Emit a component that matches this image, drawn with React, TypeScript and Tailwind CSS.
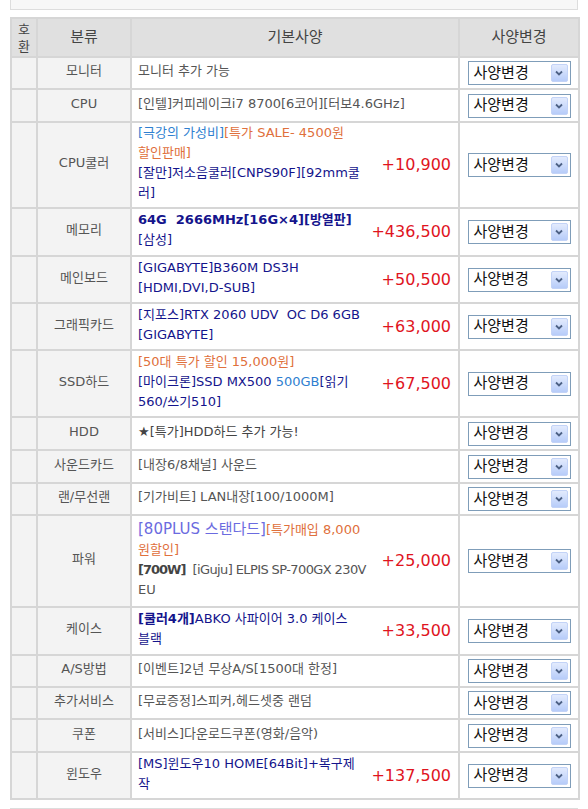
import React from "react";

type Seg = { t: string; c: string; b?: boolean; s?: string };
type Row = { cat: string; h: string; price?: string; lines: Seg[][] };

const GRAY = "text-[#555555]";
const NAVY = "text-[#14148c]";
const BLUE = "text-[#2f7fd0]";
const ORANGE = "text-[#e0703c]";
const LAV = "text-[#6b6be0]";
const DARK = "text-[#444444]";

const rows: Row[] = [
  { cat: "모니터", h: "h-[32px]", lines: [[{ t: "모니터 추가 가능", c: GRAY }]] },
  { cat: "CPU", h: "h-[33px]", lines: [[{ t: "[인텔]커피레이크i7 8700[6코어][터보4.6GHz]", c: GRAY }]] },
  {
    cat: "CPU쿨러",
    h: "h-[85px]",
    price: "+10,900",
    lines: [
      [{ t: "[극강의 가성비]", c: BLUE }, { t: "[특가 SALE- 4500원", c: ORANGE }],
      [{ t: "할인판매]", c: ORANGE }],
      [{ t: "[잘만]저소음쿨러[CNPS90F][92mm쿨", c: NAVY }],
      [{ t: "러]", c: NAVY }],
    ],
  },
  {
    cat: "메모리",
    h: "h-[48px]",
    price: "+436,500",
    lines: [[{ t: "64G  2666MHz[16G×4][방열판]", c: NAVY, b: true }], [{ t: "[삼성]", c: NAVY }]],
  },
  {
    cat: "메인보드",
    h: "h-[47px]",
    price: "+50,500",
    lines: [[{ t: "[GIGABYTE]B360M DS3H", c: NAVY }], [{ t: "[HDMI,DVI,D-SUB]", c: NAVY }]],
  },
  {
    cat: "그래픽카드",
    h: "h-[47px]",
    price: "+63,000",
    lines: [[{ t: "[지포스]RTX 2060 UDV  OC D6 6GB", c: NAVY }], [{ t: "[GIGABYTE]", c: NAVY }]],
  },
  {
    cat: "SSD하드",
    h: "h-[67px]",
    price: "+67,500",
    lines: [
      [{ t: "[50대 특가 할인 15,000원]", c: ORANGE }],
      [{ t: "[마이크론]SSD MX500 ", c: NAVY }, { t: "500GB", c: BLUE }, { t: "[읽기", c: NAVY }],
      [{ t: "560/쓰기510]", c: NAVY }],
    ],
  },
  { cat: "HDD", h: "h-[33px]", lines: [[{ t: "★[특가]HDD하드 추가 가능!", c: DARK }]] },
  { cat: "사운드카드", h: "h-[33px]", lines: [[{ t: "[내장6/8채널] 사운드", c: GRAY }]] },
  { cat: "랜/무선랜", h: "h-[32px]", lines: [[{ t: "[기가비트] LAN내장[100/1000M]", c: GRAY }]] },
  {
    cat: "파워",
    h: "h-[92px]",
    price: "+25,000",
    lines: [
      [{ t: "[80PLUS 스탠다드]", c: LAV, s: "text-[15px]" }, { t: "[특가매입 8,000", c: ORANGE }],
      [{ t: "원할인]", c: ORANGE }],
      [
        { t: "[700W]", c: DARK, b: true, s: "tracking-[-1px]" },
        { t: "  [iGuju] ELPIS SP-700GX 230V", c: GRAY, s: "tracking-[-0.6px]" },
      ],
      [{ t: "EU", c: GRAY }],
    ],
  },
  {
    cat: "케이스",
    h: "h-[48px]",
    price: "+33,500",
    lines: [
      [{ t: "[쿨러4개]", c: NAVY, b: true }, { t: "ABKO 사파이어 3.0 케이스", c: NAVY }],
      [{ t: "블랙", c: NAVY }],
    ],
  },
  { cat: "A/S방법", h: "h-[32px]", lines: [[{ t: "[이벤트]2년 무상A/S[1500대 한정]", c: GRAY }]] },
  { cat: "추가서비스", h: "h-[32px]", lines: [[{ t: "[무료증정]스피커,헤드셋중 랜덤", c: GRAY }]] },
  { cat: "쿠폰", h: "h-[33px]", lines: [[{ t: "[서비스]다운로드쿠폰(영화/음악)", c: GRAY }]] },
  {
    cat: "윈도우",
    h: "h-[47px]",
    price: "+137,500",
    lines: [[{ t: "[MS]윈도우10 HOME[64Bit]+복구제", c: NAVY }], [{ t: "작", c: NAVY }]],
  },
];

const FakeSelect = () => (
  <div className="mx-auto flex h-[24px] w-[103px] items-center border border-[#7f9db9] bg-white">
    <span className="flex-1 pl-[5px] text-[15px] leading-none text-[#111]">사양변경</span>
    <span className="mr-[2px] flex h-[18px] w-[17px] items-center justify-center rounded-[2px] border border-[#c3d3f7] bg-gradient-to-b from-[#e3ebfd] to-[#b7ccf9]">
      <svg width="8" height="6" viewBox="0 0 8 6">
        <path d="M1 1.5 L4 4.5 L7 1.5" fill="none" stroke="#4d6185" strokeWidth="1.8" />
      </svg>
    </span>
  </div>
);

const cellBorder = "border-2 border-[#d6d6d6]";

export default function App() {
  return (
    <div
      className="w-[588px] bg-white"
      style={{ fontFamily: '"DejaVu Sans", "Noto Sans CJK KR", sans-serif' }}
    >
      <div className="mx-[10px] h-[10px] border border-t-0 border-[#dddddd] bg-[#f7f7f7]" />
      <div className="px-[10px] pt-[7px]">
        <table className="w-[568px] table-fixed border-collapse text-[13px]">
          <colgroup>
            <col className="w-[26px]" />
            <col className="w-[94px]" />
            <col className="w-[328px]" />
            <col className="w-[120px]" />
          </colgroup>
          <thead>
            <tr className="h-[39px] bg-[#e0e0e0] text-[#444]">
              <th className={`${cellBorder} p-0 text-[13px] font-normal leading-[17px]`}>
                호<br />환
              </th>
              <th className={`${cellBorder} text-[15px] font-normal`}>분류</th>
              <th className={`${cellBorder} text-[15px] font-normal`}>기본사양</th>
              <th className={`${cellBorder} text-[15px] font-normal`}>사양변경</th>
            </tr>
          </thead>
          <tbody>
            {rows.map((r) => (
              <tr key={r.cat} className={r.h}>
                <td className={`${cellBorder} bg-[#f3f3f3]`} />
                <td className={`${cellBorder} bg-[#f3f3f3] pb-[4px] text-center text-[#555]`}>{r.cat}</td>
                <td className={`${cellBorder} py-0 pl-[6px] pr-[7px]`}>
                  <div className="flex items-center justify-between gap-1">
                    <div className="min-w-0 pb-[4px] leading-[20px]">
                      {r.lines.map((ln, i) => (
                        <div key={i} className="whitespace-pre">
                          {ln.map((s, j) => (
                            <span key={j} className={`${s.c} ${s.b ? "font-bold" : ""} ${s.s ?? ""}`}>
                              {s.t}
                            </span>
                          ))}
                        </div>
                      ))}
                    </div>
                    {r.price && <span className="shrink-0 text-[16px] text-[#e0141e]">{r.price}</span>}
                  </div>
                </td>
                <td className={`${cellBorder} p-0`}>
                  <FakeSelect />
                </td>
              </tr>
            ))}
          </tbody>
        </table>
      </div>
      <div className="mx-[10px] mt-[8px] h-[10px] border border-b-0 border-[#dddddd] bg-[#f7f7f7]" />
    </div>
  );
}
